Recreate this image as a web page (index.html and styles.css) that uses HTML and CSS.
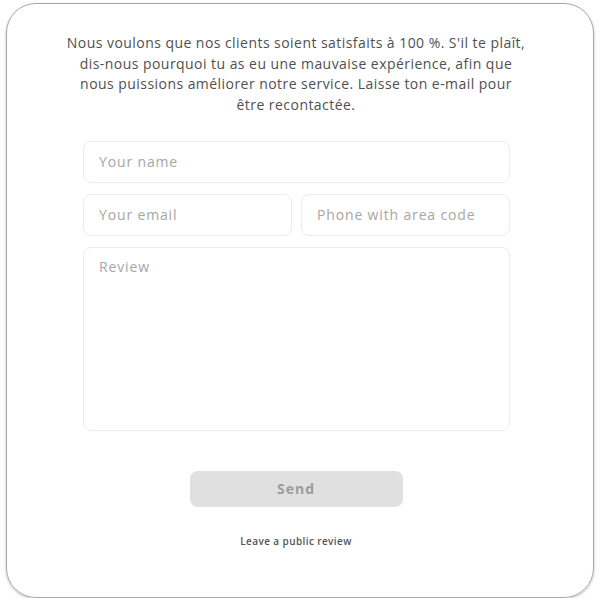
FILE: index.html
```html
<!DOCTYPE html>
<html lang="fr">
<head>
    <meta charset="UTF-8">
    <meta name="viewport" content="width=device-width, initial-scale=1.0">
    <title>Review</title>
    <link rel="stylesheet" href="styles.css">
</head>
<body>

    <div class="card">
        <p class="intro">Nous voulons que nos clients soient satisfaits à 100 %. S'il te plaît, dis-nous pourquoi tu as eu une mauvaise expérience, afin que nous puissions améliorer notre service. Laisse ton e-mail pour être recontactée.</p>

        <form class="review-form">
            <input type="text" class="field full" placeholder="Your name">
            <input type="email" class="field" placeholder="Your email">
            <input type="tel" class="field" placeholder="Phone with area code">
            <textarea class="field full area" placeholder="Review"></textarea>
        </form>

        <button class="btn-send" type="button">Send</button>

        <a class="public-link" href="#">Leave a public review</a>
    </div>

</body>
</html>
```

FILE: styles.css
```css
/* General Styling */
* {
    box-sizing: border-box;
    margin: 0;
    padding: 0;
}

body {
    font-family: "Open Sans", "DejaVu Sans", sans-serif;
    background: #fff;
    padding: 3px 0 0 6px;
}

/* Card */
.card {
    width: 588px;
    height: 595px;
    border: 1px solid #a9a9a9;
    border-radius: 30px;
    box-shadow: 0px 1px 3px rgba(0, 0, 0, 0.25);
    padding: 29px 86px 0 78px;
    display: flex;
    flex-direction: column;
    align-items: center;
}

.intro {
    font-size: 14px;
    line-height: 20.7px;
    letter-spacing: 0.45px;
    color: #505050;
    text-align: center;
    width: 462px;
}

/* Form */
.review-form {
    margin-top: 25px;
    width: 426px;
    display: grid;
    grid-template-columns: 1fr 1fr;
    gap: 11px 9px;
}

.field {
    font-family: inherit;
    font-size: 14px;
    letter-spacing: 0.85px;
    color: #333;
    height: 42px;
    padding: 0 15px;
    border: 1px solid #ececec;
    border-radius: 8px;
    background: #fff;
    outline: none;
}

.field::placeholder {
    color: #a6a6a6;
}

.full {
    grid-column: 1 / 3;
}

.area {
    height: 184px;
    padding: 9px 15px;
    resize: none;
}

/* Send button */
.btn-send {
    margin-top: 40px;
    width: 213px;
    height: 36px;
    border: none;
    border-radius: 8px;
    background: #e0e0e0;
    color: #9c9c9c;
    font-family: inherit;
    font-size: 14px;
    font-weight: 700;
    letter-spacing: 1px;
    cursor: pointer;
}

.public-link {
    margin-top: 27px;
    font-size: 10px;
    font-weight: 600;
    letter-spacing: 0.4px;
    color: #555;
    text-decoration: none;
}
```
